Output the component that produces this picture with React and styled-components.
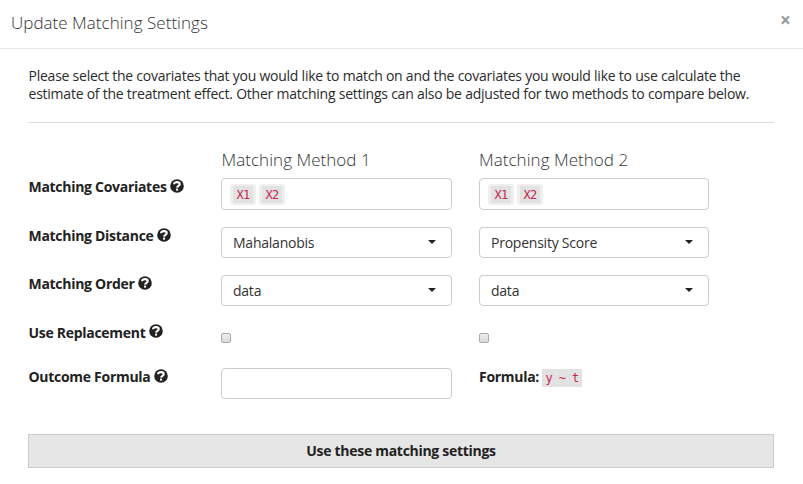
import React from 'react';
import styled, { createGlobalStyle } from 'styled-components';

const Global = createGlobalStyle`
  *, *::before, *::after { box-sizing: border-box; }
  body { margin: 0; background: #fff; color: #222; font: 14px/18px "Open Sans", sans-serif; letter-spacing: -0.235px; overflow: hidden; }
`;
const Dialog = styled.main`width: 803px; height: 484px; background: #fff;`;
const Header = styled.header`
  height: 49px; padding: 12px 12px 0 11px; display: flex; justify-content: space-between;
  border-bottom: 1px solid #e5e5e5;
`;
const Title = styled.h1`margin: 0; font-size: 17px; line-height: 22px; font-weight: 300; color: #333; letter-spacing: 0.03px;`;
const Close = styled.button`
  border: 0; background: none; padding: 0; height: 16px; width: 11px; color: #999;
  font: 700 19px/16px "Open Sans", sans-serif;
`;
const Body = styled.div`padding: 18px 29px 0 28px;`;
const Intro = styled.p`margin: 0; height: 56px; padding-left: 0.5px; white-space: nowrap; color: #2b2b2b; border-bottom: 1px solid #ddd;`;
const Settings = styled.form`
  display: grid; grid-template-columns: 193px 231px 257px;
  grid-template-rows: 28px 49px 48px 49px 44px 66px; padding-top: 27px;
`;
const Cell = styled.div`margin-left: ${p => (p.$second ? '27px' : 0)};`;
const Heading = styled.h2`
  margin: 0 0 0 ${p => (p.$flush ? 0 : '0.5px')}; font-size: 17px; line-height: 20px;
  font-weight: 300; color: #333; letter-spacing: 0.04px;
`;
const Label = styled.label`
  font-weight: 700; display: flex; gap: 3.5px; height: 18px; padding-left: 0.5px; letter-spacing: -0.29px;
  svg { width: 14px; height: 14px; margin-top: ${p => (p.$raised ? 0 : '1px')}; }
`;
const Field = styled.div`
  height: ${p => p.$h || 31}px; border: 1px solid #ccc; border-radius: 4px; padding: 0 15px 0 11px;
  display: flex; align-items: center; justify-content: space-between; color: #333;
`;
const Tags = styled(Field)`justify-content: flex-start; gap: 3px; padding-left: 8px;`;
const Code = styled.code`
  display: inline-block; height: 18px; padding: 0 3.5px; background: #e2e2e2; color: #c7254e;
  font: 12px/19px "DejaVu Sans Mono", monospace; letter-spacing: -0.6px;
`;
const Tag = styled.span`
  display: flex; width: 26px; height: 21px; padding: 2px 3px; background: #efefef; border-radius: 3px;
  ${Code} { width: 20px; height: 17px; line-height: 18px; }
`;
const Caret = styled.span`border: 4.5px solid transparent; border-top: 4px solid #222; border-bottom: 0; margin-top: -2px;`;
const Check = styled.input`
  appearance: none; display: block; width: 10px; height: 10px; margin: 9px 0 0;
  border: 1px solid #aaa; border-radius: 2px; background: linear-gradient(#eee, #dadada);
`;
const Formula = styled.div`
  display: flex; gap: 3px; font-weight: 700; white-space: nowrap; letter-spacing: -0.29px;
  ${Code} { margin-top: 1px; width: 40px; }
`;
const Submit = styled.button`
  display: block; width: 100%; height: 34px; border: 1px solid #ccc; background: #e6e6e6;
  color: #222; font: 700 14px/18px "Open Sans", sans-serif; letter-spacing: -0.29px;
`;
const HelpIcon = () => (
  <svg viewBox="0 0 14 14" fill="none">
    <circle cx="7" cy="7" r="6.8" fill="#222" />
    <path d="M4.1 5.3C4.1 3.7 5.3 3.2 7 3.2S9.7 4 9.7 5.3C9.7 7 7.3 6.8 7.1 8.6" stroke="#fff" strokeWidth="2.2" />
    <path d="M6 9.6h2.1v2H6z" fill="#fff" />
  </svg>
);
const Help = ({ children, raised }) => <Label $raised={raised}>{children}<HelpIcon /></Label>;
const Select = ({ children }) => <Field>{children}<Caret /></Field>;
const Covariates = () => <Tags $h={32}><Tag><Code>X1</Code></Tag><Tag><Code>X2</Code></Tag></Tags>;

export default function App() {
  return <><Global /><Dialog>
    <Header><Title>Update Matching Settings</Title><Close>×</Close></Header>
    <Body>
      <Intro>Please select the covariates that you would like to match on and the covariates you would like to use calculate the<br />estimate of the treatment effect. Other matching settings can also be adjusted for two methods to compare below.</Intro>
      <Settings>
        <span /><Cell><Heading>Matching Method 1</Heading></Cell><Cell $second><Heading $flush>Matching Method 2</Heading></Cell>
        <Help>Matching Covariates</Help><Cell><Covariates /></Cell><Cell $second><Covariates /></Cell>
        <Help>Matching Distance</Help><Cell><Select>Mahalanobis</Select></Cell><Cell $second><Select>Propensity Score</Select></Cell>
        <Help>Matching Order</Help><Cell><Select>data</Select></Cell><Cell $second><Select>data</Select></Cell>
        <Help raised>Use Replacement</Help><Cell><Check type="checkbox" /></Cell><Cell $second><Check type="checkbox" /></Cell>
        <Help>Outcome Formula</Help><Cell><Field /></Cell><Cell $second><Formula>Formula: <Code>y ~ t</Code></Formula></Cell>
      </Settings>
      <Submit type="button">Use these matching settings</Submit>
    </Body>
  </Dialog></>;
}
